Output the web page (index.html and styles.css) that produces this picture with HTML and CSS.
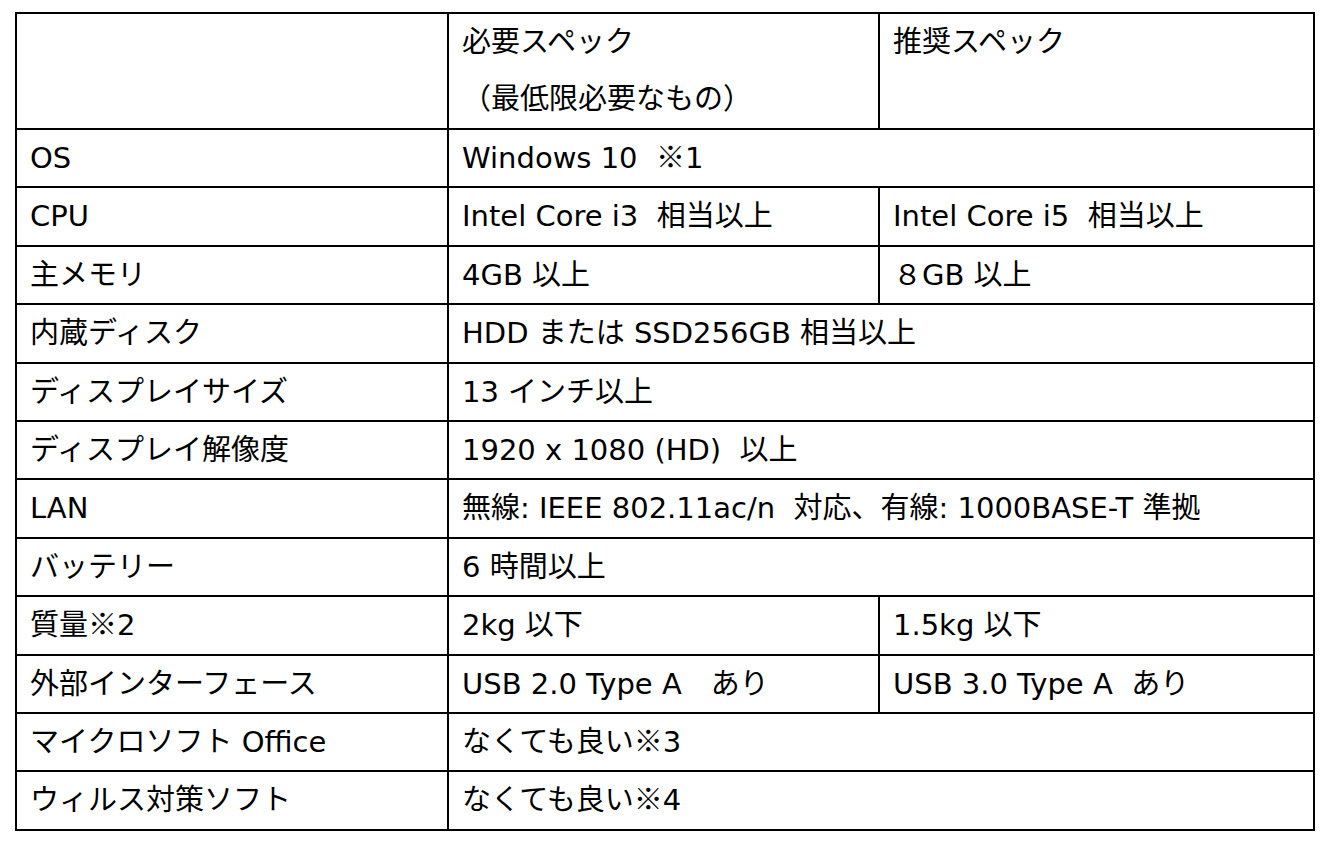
FILE: index.html
```html
<!DOCTYPE html>
<html lang="ja">
<head>
<meta charset="utf-8">
<title>スペック表</title>
<link rel="stylesheet" href="styles.css">
</head>
<body>
<table class="spec">
<colgroup><col class="c1"><col class="c2"><col class="c3"></colgroup>
<tr class="head"><td></td><td>必要スペック<br>（最低限必要なもの）</td><td>推奨スペック</td></tr>
<tr><td>OS</td><td colspan="2">Windows 10&nbsp;&nbsp;<span class="mark">※</span>1</td></tr>
<tr><td>CPU</td><td>Intel Core i3&nbsp;&nbsp;相当以上</td><td>Intel Core i5&nbsp;&nbsp;相当以上</td></tr>
<tr><td>主メモリ</td><td>4GB 以上</td><td>８GB 以上</td></tr>
<tr><td>内蔵ディスク</td><td colspan="2">HDD または SSD256GB 相当以上</td></tr>
<tr><td>ディスプレイサイズ</td><td colspan="2">13 インチ以上</td></tr>
<tr><td>ディスプレイ解像度</td><td colspan="2">1920 x 1080 (HD)&nbsp;&nbsp;以上</td></tr>
<tr><td>LAN</td><td colspan="2">無線: IEEE 802.11ac/n&nbsp;&nbsp;対応、有線: 1000BASE-T 準拠</td></tr>
<tr><td>バッテリー</td><td colspan="2">6 時間以上</td></tr>
<tr><td>質量<span class="mark">※</span>2</td><td>2kg 以下</td><td>1.5kg 以下</td></tr>
<tr><td>外部インターフェース</td><td>USB 2.0 Type A　あり</td><td>USB 3.0 Type A&nbsp;&nbsp;あり</td></tr>
<tr><td>マイクロソフト Office</td><td colspan="2">なくても良い<span class="mark">※</span>3</td></tr>
<tr><td>ウィルス対策ソフト</td><td colspan="2">なくても良い<span class="mark">※</span>4</td></tr>
</table>
</body>
</html>
```
FILE: styles.css
```css
html, body {
  margin: 0;
  padding: 0;
  background: #ffffff;
}
body {
  font-family: "DejaVu Sans", "Noto Sans CJK JP", sans-serif;
  font-size: 29px;
  color: #000000;
}
.spec {
  border-collapse: collapse;
  table-layout: fixed;
  width: 1298px;
  margin: 12px 0 0 15px;
}
.spec col.c1 { width: 432px; }
.spec col.c2 { width: 431px; }
.spec col.c3 { width: 435px; }
.spec td {
  border: 2px solid #000000;
  padding: 0 13px;
  line-height: 56.4px;
  vertical-align: top;
  white-space: nowrap;
}
.spec tr.head td {
  line-height: 57px;
  padding-top: 0;
}
.mark {
  font-family: "Noto Sans CJK JP", sans-serif;
  line-height: 1;
}
```
